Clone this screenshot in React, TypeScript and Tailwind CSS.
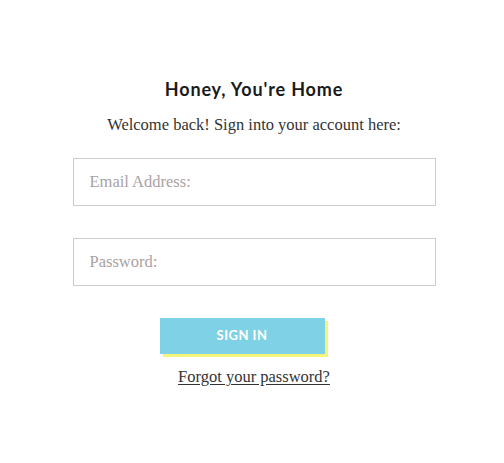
import React, { useState } from "react";

const App = () => {
  const [email, setEmail] = useState("");
  const [password, setPassword] = useState("");

  return (
    <div className="min-h-[463px] w-full bg-white pt-[78px]">
      <div className="mx-auto flex w-[363px] translate-x-[2px] flex-col items-center">
        <h1 className="font-['Lato','Open_Sans',sans-serif] text-[18px] font-bold leading-[22px] tracking-[0.85px] text-[#1a1a1a]">
          Honey, You're Home
        </h1>
        <p className="mt-[15px] font-['Liberation_Serif','DejaVu_Serif',serif] text-[16.5px] leading-[20px] text-[#333]">
          Welcome back! Sign into your account here:
        </p>

        <form className="mt-[23px] flex w-full flex-col" onSubmit={(e) => e.preventDefault()}>
          <input
            type="email"
            value={email}
            onChange={(e) => setEmail(e.target.value)}
            placeholder="Email Address:"
            className="h-[48px] w-full border border-[#cccccc] px-4 font-['Liberation_Serif','DejaVu_Serif',serif] text-[16.5px] text-[#333] outline-none placeholder:text-[#aaa2a2]"
          />
          <input
            type="password"
            value={password}
            onChange={(e) => setPassword(e.target.value)}
            placeholder="Password:"
            className="mt-[32px] h-[48px] w-full border border-[#cccccc] px-4 font-['Liberation_Serif','DejaVu_Serif',serif] text-[16.5px] text-[#333] outline-none placeholder:text-[#aaa2a2]"
          />

          <div className="mt-[32px] flex justify-start pl-[87px]">
            <button
              type="submit"
              className="h-[36px] w-[165px] bg-[#7fd1e5] font-['Lato','Open_Sans',sans-serif] text-[13px] font-bold tracking-[0.5px] text-white shadow-[3px_3px_0_#f2f57a]"
            >
              SIGN IN
            </button>
          </div>

          <a
            href="#"
            className="mt-[13px] self-center font-['Liberation_Serif','DejaVu_Serif',serif] text-[16.5px] leading-[20px] text-[#333] underline underline-offset-2"
          >
            Forgot your password?
          </a>
        </form>
      </div>
    </div>
  );
};

export default App;
